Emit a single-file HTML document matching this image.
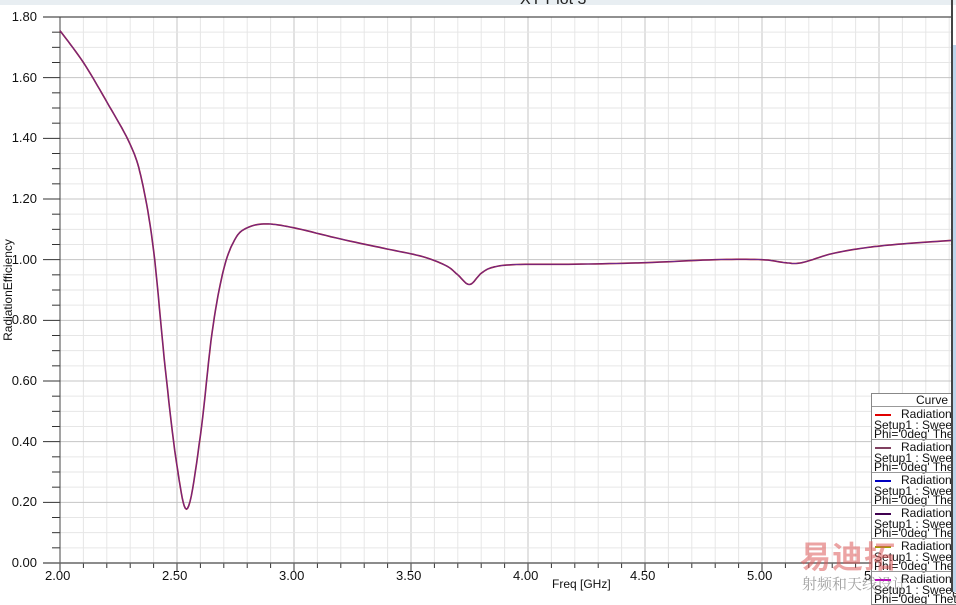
<!DOCTYPE html>
<html><head><meta charset="utf-8"><style>
html,body{margin:0;padding:0;width:956px;height:592px;overflow:hidden;background:#fff;font-family:"Liberation Sans",Arial,sans-serif;}
.lbl{position:absolute;font-size:13px;color:#111;}
#leg{position:absolute;left:871px;top:393px;width:90px;height:210px;background:#fff;border:1px solid #888;font-size:12px;line-height:10px;color:#111;overflow:hidden;}
.ent{position:absolute;left:0;width:100%;border-top:1px solid #999;height:32px;}
.ent .ln{position:absolute;left:3px;top:7px;width:16px;height:2px;}
.ent .t1{position:absolute;left:29px;top:2px;white-space:nowrap;}
.ent .t2{position:absolute;left:2px;top:13px;white-space:nowrap;}
.ent .t3{position:absolute;left:2px;top:22px;white-space:nowrap;}
</style></head><body>
<div style="position:absolute;left:0;top:0;width:956px;height:5px;background:#e8eef2"></div>
<div style="position:absolute;left:520px;top:-9px;font-size:16px;color:#222">XY Plot 3</div>
<svg id="s" width="956" height="592" style="position:absolute;left:0;top:0"></svg>
<div id="labels"></div>
<div class="lbl" style="left:-52px;top:283px;transform:rotate(-90deg);width:120px;text-align:center;font-size:12px">RadiationEfficiency</div>
<div class="lbl" style="left:552px;top:577px;font-size:12px">Freq [GHz]</div>
<div id="leg">
<div style="position:absolute;left:44px;top:1px">Curve I</div>
</div>
<div style="position:absolute;left:951px;top:0;width:2px;height:592px;background:#444"></div>
<div style="position:absolute;left:953px;top:45px;width:3px;height:547px;background:#bcd4ea"></div>
<div style="position:absolute;left:800px;top:532px;font-size:31px;font-weight:bold;color:rgba(220,90,90,0.55);font-family:'Liberation Sans','Noto Sans CJK SC',sans-serif;letter-spacing:1px">易迪拓</div>
<div style="position:absolute;left:802px;top:573px;font-size:15px;color:rgba(120,120,120,0.7);font-family:'Noto Serif CJK SC',serif">射频和天线设计</div>
<script>
var s=document.getElementById('s'),h='';
function X(f){return 60+(f-2)*234}
function Y(v){return 563-v*303.33}
for(var i=0;i<=38;i++){var f=2+i*0.1,x=X(f);if(x>951)break;var maj=i%5==0;
h+='<line x1="'+x+'" y1="17" x2="'+x+'" y2="563" stroke="'+(maj?'#c4c4c4':'#e6e6e6')+'"/>';
h+='<line x1="'+x+'" y1="563" x2="'+x+'" y2="'+(maj?571:568)+'" stroke="#333"/>';}
for(var j=0;j<=36;j++){var v=j*0.05,y=Y(v);var maj=j%4==0;
h+='<line x1="60" y1="'+y+'" x2="951" y2="'+y+'" stroke="'+(maj?'#c4c4c4':'#e6e6e6')+'"/>';
h+='<line x1="'+(maj?43:52)+'" y1="'+y+'" x2="60" y2="'+y+'" stroke="#333"/>';}
h+='<line x1="43" y1="17" x2="951" y2="17" stroke="#222"/>';
h+='<line x1="60" y1="17" x2="60" y2="563" stroke="#444"/>';
h+='<line x1="43" y1="563" x2="951" y2="563" stroke="#666" stroke-width="1.5"/>';
var d=[[2,1.755],[2.1,1.65],[2.2,1.52],[2.3,1.38],[2.35,1.26],[2.4,1.03],[2.45,0.64],[2.5,0.32],[2.545,0.18],[2.6,0.42],[2.65,0.76],[2.7,0.97],[2.75,1.07],[2.8,1.105],[2.88,1.118],[3.0,1.105],[3.2,1.068],[3.4,1.035],[3.55,1.01],[3.65,0.98],[3.7,0.95],[3.75,0.918],[3.8,0.955],[3.85,0.975],[3.95,0.984],[4.2,0.985],[4.5,0.99],[4.8,1.0],[5.0,1.0],[5.1,0.99],[5.17,0.99],[5.3,1.02],[5.45,1.04],[5.6,1.052],[5.8,1.063],[5.85,1.066]];
var pts=[];
for(var k=0;k<d.length-1;k++){var p0=d[Math.max(k-1,0)],p1=d[k],p2=d[k+1],p3=d[Math.min(k+2,d.length-1)];
for(var t=0;t<1;t+=0.1){var t2=t*t,t3=t2*t;
var fx=0.5*((2*p1[0])+(-p0[0]+p2[0])*t+(2*p0[0]-5*p1[0]+4*p2[0]-p3[0])*t2+(-p0[0]+3*p1[0]-3*p2[0]+p3[0])*t3);
var fy=0.5*((2*p1[1])+(-p0[1]+p2[1])*t+(2*p0[1]-5*p1[1]+4*p2[1]-p3[1])*t2+(-p0[1]+3*p1[1]-3*p2[1]+p3[1])*t3);
pts.push(X(fx).toFixed(1)+','+Y(fy).toFixed(1));}}
pts.push(X(5.85)+','+Y(1.066));
h+='<polyline points="'+pts.join(' ')+'" fill="none" stroke="#a01020" stroke-width="1.6"/>';
h+='<polyline points="'+pts.join(' ')+'" fill="none" stroke="#6030b0" stroke-width="0.9" opacity="0.8"/>';
s.innerHTML=h;
var L='';
for(var j=0;j<=9;j++){L+='<div class="lbl" style="left:0;width:37px;text-align:right;top:'+(Y(j*0.2)-8)+'px">'+(j*0.2).toFixed(2)+'</div>';}
for(var i=0;i<=7;i++){var f=2+i*0.5,x=X(f);if(x>900)break;L+='<div class="lbl" style="left:'+(x-15)+'px;top:568px">'+f.toFixed(2)+'</div>';}
document.getElementById('labels').innerHTML=L;
var cols=['#e00000','#804060','#0000c0','#400050','#a0a000','#c000c0'],E='';
for(var i=0;i<6;i++){E+='<div class="ent" style="top:'+(12+i*33)+'px"><div class="ln" style="background:'+cols[i]+'"></div><div class="t1">RadiationEfficiency</div><div class="t2">Setup1 : Sweep</div><div class="t3">Phi=\'0deg\' Theta</div></div>';}
document.getElementById('leg').innerHTML+=E;
</script>
</body></html>
